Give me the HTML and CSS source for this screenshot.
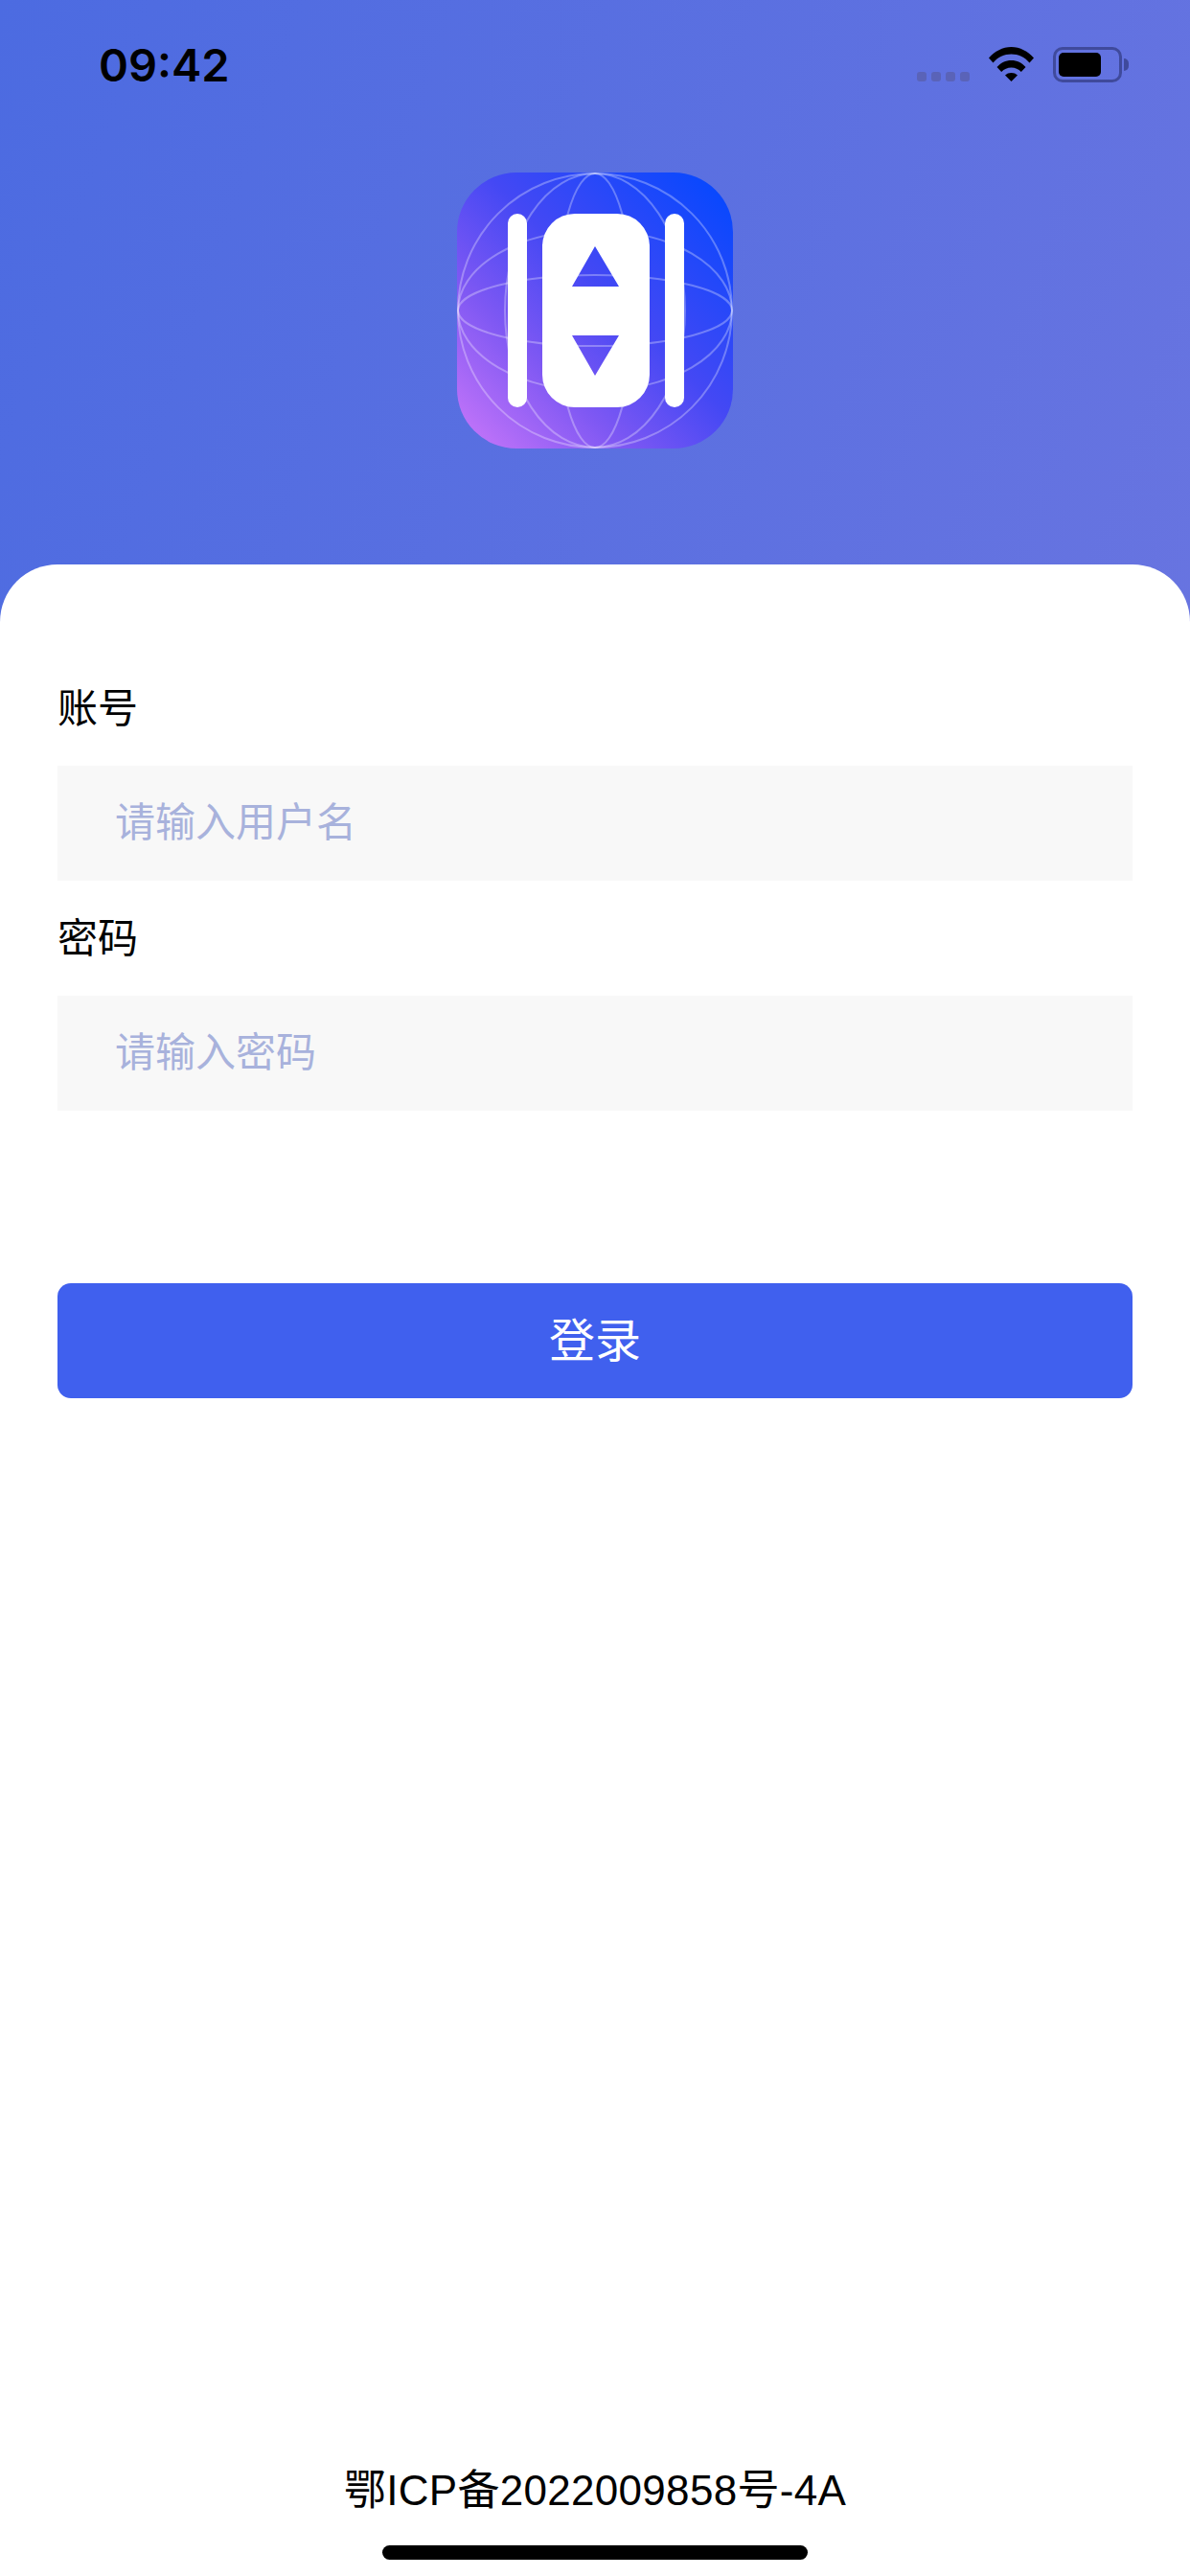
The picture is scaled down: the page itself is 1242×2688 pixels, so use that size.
FILE: index.html
```html
<!DOCTYPE html>
<html lang="zh-CN">
<head>
    <meta charset="UTF-8">
    <meta name="viewport" content="width=device-width, initial-scale=1.0">
    <title>登录</title>
    <link rel="stylesheet" href="styles.css">
</head>
<body>

<div class="page">
    <header class="header">
        <div class="status-bar">
            <span class="time">09:42</span>
            <div class="status-icons">
                <div class="signal"><i></i><i></i><i></i><i></i></div>
                <svg class="wifi" width="47" height="36" viewBox="0 0 47 36">
                    <path d="M0 11.5C6 4.5 14.500 0 23.500 0S41 4.500 47 11.500L42.500 16.500C37.500 10.500 31 7.500 23.500 7.500S9.500 10.500 4.500 16.500Z"/>
                    <path d="M8.500 21C12.500 16.500 17.500 14 23.500 14S34.500 16.500 38.500 21L33.800 26C31 23 27.500 21.500 23.500 21.500S16 23 13.200 26Z"/>
                    <path d="M17 29.500C18.800 27.800 21 27 23.500 27S28.200 27.800 30 29.500L23.500 36Z"/>
                </svg>
                <div class="battery">
                    <div class="battery-body"><div class="battery-fill"></div></div>
                    <div class="battery-cap"></div>
                </div>
            </div>
        </div>
        <svg class="logo" width="288" height="288" viewBox="0 0 288 288">
            <defs>
                <linearGradient id="logoBg" x1="0" y1="1" x2="1" y2="0">
                    <stop offset="0" stop-color="#cc78fa"/>
                    <stop offset="0.3" stop-color="#7f58f3"/>
                    <stop offset="0.55" stop-color="#4448f4"/>
                    <stop offset="1" stop-color="#0048ff"/>
                </linearGradient>
            </defs>
            <rect width="288" height="288" rx="62" fill="url(#logoBg)"/>
            <g class="globe">
                <circle cx="144" cy="144" r="143"/>
                <ellipse cx="144" cy="144" rx="94" ry="143"/>
                <ellipse cx="144" cy="144" rx="40" ry="143"/>
                <ellipse cx="144" cy="144" rx="143" ry="84"/>
                <ellipse cx="144" cy="144" rx="143" ry="37"/>
            </g>
            <rect x="53" y="43" width="20" height="202" rx="10" fill="#fff"/>
            <rect x="217" y="43" width="20" height="202" rx="10" fill="#fff"/>
            <path fill="#fff" fill-rule="evenodd" d="M123 43H167A34 34 0 0 1 201 77V211A34 34 0 0 1 167 245H123A34 34 0 0 1 89 211V77A34 34 0 0 1 123 43ZM144 77L120 119H169ZM120 170L144 212L169 170Z"/>
        </svg>
    </header>

    <main class="card">
        <label class="field-label" for="user">账号</label>
        <input class="field-input" id="user" type="text" placeholder="请输入用户名">
        <label class="field-label" for="pwd">密码</label>
        <input class="field-input" id="pwd" type="password" placeholder="请输入密码">
        <button class="login-btn" type="button">登录</button>
        <footer class="footer">鄂ICP备2022009858号-4A</footer>
        <div class="home-bar"></div>
    </main>
</div>

</body>
</html>
```

FILE: styles.css
```css
* {
    box-sizing: border-box;
}
body {
    margin: 0;
    font-family: "Liberation Sans", "Noto Sans CJK SC", sans-serif;
    color: #000;
}
.page {
    display: flex;
    flex-direction: column;
    height: 2688px;
    overflow: hidden;
    background: linear-gradient(108deg, #4c6be1 0%, #7478e0 100%);
}

/* Top area */
.header {
    display: flex;
    flex-direction: column;
    align-items: center;
    height: 589px;
}
.status-bar {
    display: flex;
    justify-content: space-between;
    width: 100%;
    height: 180px;
    padding: 38px 64px 0 103px;
}
.time {
    font-family: Inter, "Liberation Sans", sans-serif;
    font-size: 47px;
    font-weight: 600;
    line-height: 60px;
}
.status-icons {
    display: flex;
    align-items: flex-start;
    padding-top: 11px;
}
.signal {
    display: flex;
    gap: 5px;
    margin-top: 26px;
    margin-right: 20px;
}
.signal i {
    width: 10px;
    height: 10px;
    border-radius: 3px;
    background-color: #5a63b8;
}
.wifi {
    display: block;
    margin-right: 20px;
}
.battery {
    display: flex;
    align-items: center;
}
.battery-body {
    width: 72px;
    height: 37px;
    padding: 3px;
    border: 3px solid #3f4a9c;
    border-radius: 10px;
}
.battery-fill {
    width: 44px;
    height: 25px;
    border-radius: 5px;
    background-color: #000;
}
.battery-cap {
    width: 5px;
    height: 13px;
    margin-left: 2px;
    border-radius: 0 5px 5px 0;
    background-color: #3f4a9c;
}
.logo {
    display: block;
}
.globe {
    fill: none;
    stroke: rgba(255, 255, 255, 0.3);
    stroke-width: 2;
}

/* Form */
.card {
    flex: 1;
    display: flex;
    flex-direction: column;
    padding: 90px 60px 17px;
    border-radius: 60px 60px 0 0;
    background-color: #fff;
}
.field-label {
    font-size: 42px;
    line-height: 122px;
    height: 120px;
}
.field-input {
    width: 100%;
    height: 120px;
    padding: 0 60px;
    border: none;
    outline: none;
    font-family: inherit;
    font-size: 42px;
    color: #000;
    background-color: #f8f8f8;
}
.field-input::placeholder {
    color: #a8b2dc;
    opacity: 1;
}
.login-btn {
    height: 120px;
    margin-top: 180px;
    padding-bottom: 9px;
    border: none;
    border-radius: 14px;
    font-family: inherit;
    font-size: 48px;
    color: #fff;
    background-color: #4060ee;
}
.footer {
    margin-top: auto;
    font-size: 44px;
    letter-spacing: 0.3px;
    line-height: 64px;
    text-align: center;
}
.home-bar {
    align-self: center;
    width: 444px;
    height: 15px;
    margin-top: 25px;
    border-radius: 8px;
    background-color: #000;
}
```
